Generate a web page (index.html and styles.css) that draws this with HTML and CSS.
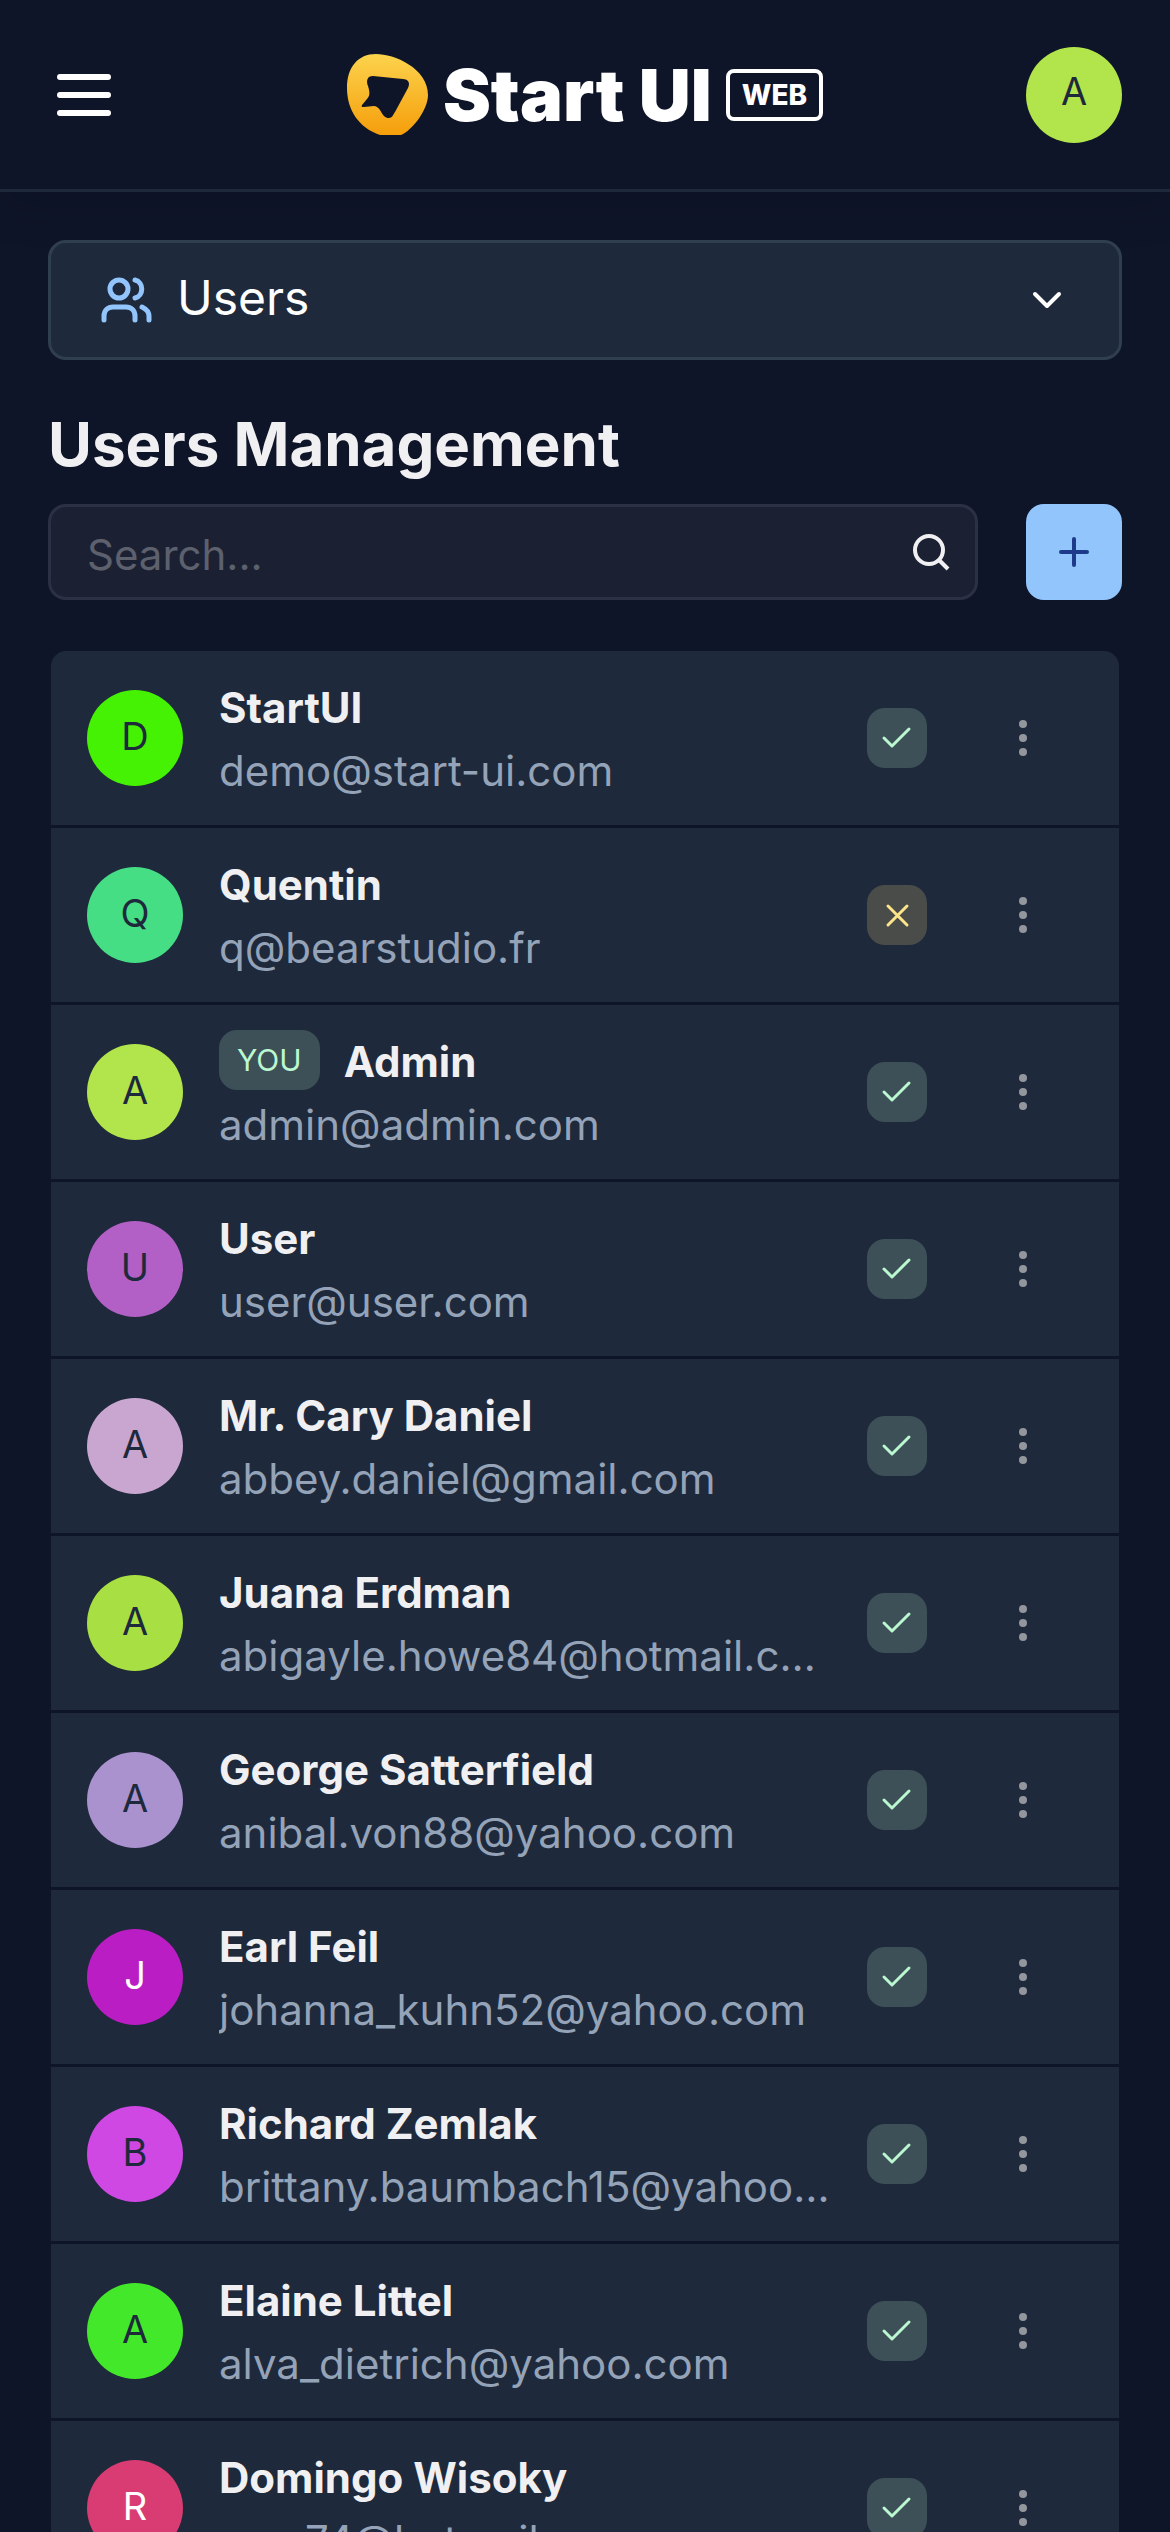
FILE: index.html
```html
<!DOCTYPE html>
<html lang="en">
<head>
<meta charset="utf-8">
<title>Users Management</title>
<meta name="viewport" content="width=device-width, initial-scale=1">
<link rel="stylesheet" href="styles.css">
</head>
<body>
<svg class="sprite" aria-hidden="true">
  <symbol id="check" viewBox="0 0 36 36"><path d="M5 18l8 8L30 9" fill="none" stroke="currentColor" stroke-width="3" stroke-linecap="round" stroke-linejoin="round"/></symbol>
  <symbol id="cross" viewBox="0 0 36 36"><path d="M9 9l19 19M28 9L9 28" fill="none" stroke="currentColor" stroke-width="3" stroke-linecap="round"/></symbol>
  <symbol id="dots" viewBox="0 0 48 48"><g fill="currentColor"><circle cx="24" cy="10" r="4"/><circle cx="24" cy="24" r="4"/><circle cx="24" cy="38" r="4"/></g></symbol>
</svg>
<header class="topbar">
  <button class="icon-button" aria-label="Open menu">
    <svg class="burger" viewBox="0 0 54 48"><path d="M3 6h48M3 24h48M3 42h48" stroke="currentColor" stroke-width="6" stroke-linecap="round"/></svg>
  </button>
  <a class="logo" href="#" aria-label="Start UI Web">
    <svg class="logo-mark" viewBox="0 0 82 82">
      <defs><linearGradient id="gold" x1="0" y1="0" x2="0" y2="1"><stop offset="0" stop-color="#fcd34d"/><stop offset="1" stop-color="#f59e0b"/></linearGradient></defs>
      <path fill="url(#gold)" fill-rule="evenodd" d="M29 0C47 0 81 14 81 41C81 55 66 76 54 81H33C12 74 0 56 0 34C0 13 11 0 29 0zM26 22C20 22 19 27 21 32C23 38 23 42 20 45L15 51C14 53 15 53 17 53L27 52C35 53 34 64 42 64C45 64 46 61 48 58L61 34C64 28 60 25 56 25z"/>
    </svg>
    <span class="logo-text">Start UI</span>
    <span class="logo-tag">WEB</span>
  </a>
  <button class="avatar avatar-account" style="background:#b2e44b">A</button>
</header>
<main class="page">
  <button class="nav-select">
    <svg class="nav-icon" viewBox="0 0 54 54" fill="none" stroke="currentColor" stroke-width="5" stroke-linecap="round"><circle cx="20" cy="16" r="9"/><path d="M5 47v-4c0-6 4-9 9-9h13c5 0 9 3 9 9v4M36 7c9 2 9 16 0 18M43 34c4 2 7 5 7 9v4"/></svg>
    <span class="nav-label">Users</span>
    <svg class="chevron" viewBox="0 0 48 48"><path d="M12 18l12 12 12-12" fill="none" stroke="currentColor" stroke-width="4" stroke-linecap="round" stroke-linejoin="round"/></svg>
  </button>
  <h1 class="title">Users Management</h1>
  <div class="toolbar">
    <label class="search">
      <input type="search" placeholder="Search..." aria-label="Search">
      <svg class="search-icon" viewBox="0 0 48 48" fill="none" stroke="currentColor" stroke-width="4"><circle cx="22" cy="22" r="14"/><path d="M32 32l9 9"/></svg>
    </label>
    <button class="add" aria-label="Add user"><svg class="plus" viewBox="0 0 48 48"><path d="M24 11v26M11 24h26" stroke="currentColor" stroke-width="4" stroke-linecap="round"/></svg></button>
  </div>
  <ul class="users" id="users"></ul>
</main>
<script src="users.js"></script>
</body>
</html>
```
FILE: users.js
```js
const users = [
  { initial: 'D', color: '#46f203', name: 'StartUI', email: 'demo@start-ui.com' },
  { initial: 'Q', color: '#46de84', name: 'Quentin', email: 'q@bearstudio.fr', disabled: true },
  { initial: 'A', color: '#b2e44b', name: 'Admin', email: 'admin@admin.com', you: true },
  { initial: 'U', color: '#b25fc6', name: 'User', email: 'user@user.com' },
  { initial: 'A', color: '#c9a6cf', name: 'Mr. Cary Daniel', email: 'abbey.daniel@gmail.com' },
  { initial: 'A', color: '#a8e043', name: 'Juana Erdman', email: 'abigayle.howe84@hotmail.com' },
  { initial: 'A', color: '#aa92cf', name: 'George Satterfield', email: 'anibal.von88@yahoo.com' },
  { initial: 'J', color: '#bb1dc4', name: 'Earl Feil', email: 'johanna_kuhn52@yahoo.com', light: true },
  { initial: 'B', color: '#cf48e4', name: 'Richard Zemlak', email: 'brittany.baumbach15@yahoo.com' },
  { initial: 'A', color: '#44e82b', name: 'Elaine Littel', email: 'alva_dietrich@yahoo.com' },
  { initial: 'R', color: '#d83c72', name: 'Domingo Wisoky', email: 'rosa74@hotmail.com', light: true }
];

document.getElementById('users').innerHTML = users.map(u => `
  <li class="user">
    <span class="avatar${u.light ? ' avatar-light' : ''}" style="background:${u.color}">${u.initial}</span>
    <div class="identity">
      <div class="name-line">${u.you ? '<span class="badge">YOU</span>' : ''}<a class="name" href="#">${u.name}</a></div>
      <div class="email">${u.email}</div>
    </div>
    <span class="status${u.disabled ? ' status-off' : ''}"><svg class="status-icon"><use href="#${u.disabled ? 'cross' : 'check'}"/></svg></span>
    <button class="more" aria-label="Actions for ${u.name}"><svg class="more-icon"><use href="#dots"/></svg></button>
  </li>`).join('');
```
FILE: styles.css
```css
* { box-sizing: border-box; }
html { background: #0f1528; }
body {
  margin: 0;
  height: 100vh;
  overflow: hidden;
  background: #0f1528;
  color: #f0f0f2;
  font-family: Inter, "Liberation Sans", sans-serif;
  font-size: 42px;
}
button, input { font: inherit; color: inherit; border: 0; padding: 0; margin: 0; background: none; }
a { color: inherit; text-decoration: none; }
svg { display: block; flex: none; }
.sprite { display: none; }

.topbar {
  display: flex;
  align-items: center;
  justify-content: space-between;
  height: 192px;
  padding: 0 48px;
  border-bottom: 3px solid #1e293b;
  box-shadow: 0 6px 48px rgba(5, 7, 30, 0.2);
  color: #fff;
}
.icon-button { width: 96px; padding-left: 9px; }
.burger { width: 54px; height: 48px; }
.logo { display: flex; align-items: center; }
.logo-mark { width: 82px; height: 82px; }
.logo-text { margin-left: 14px; font-size: 72px; font-weight: 900; line-height: 72px; white-space: nowrap; }
.logo-tag {
  margin-left: 14px;
  padding: 0 12px;
  border: 4px solid #fff;
  border-radius: 8px;
  font-size: 28px;
  font-weight: 800;
  line-height: 44px;
}

.avatar {
  display: flex;
  flex: none;
  align-items: center;
  justify-content: center;
  width: 96px;
  height: 96px;
  padding-bottom: 4px;
  border-radius: 50%;
  color: #1e293b;
  font-size: 38px;
}
.avatar-light { color: #fff; }
.avatar-account { padding-bottom: 8px; color: #1e293b; }

.page { padding: 48px; }
.nav-select {
  display: flex;
  align-items: center;
  gap: 24px;
  width: 100%;
  height: 120px;
  padding: 0 48px;
  border: 3px solid #2f3f50;
  border-radius: 18px;
  background: #1e293b;
  color: #fff;
  font-size: 48px;
  text-align: left;
}
.nav-icon { width: 54px; height: 54px; color: #93c5fd; }
.nav-label { padding-bottom: 6px; }
.chevron { width: 48px; height: 48px; margin-left: auto; }

.title { margin: 48px 0 24px; font-size: 60px; font-weight: 700; line-height: 72px; }
.toolbar { display: flex; gap: 48px; }
.search {
  display: flex;
  flex: 1;
  align-items: center;
  height: 96px;
  padding: 0 20px 0 36px;
  border: 3px solid #2c3044;
  border-radius: 18px;
  background: #1c2033;
}
.search input { flex: 1; min-width: 0; height: 100%; padding-top: 4px; outline: 0; }
.search input::placeholder { color: #5d606d; opacity: 1; }
.search-icon { width: 48px; height: 48px; }
.add {
  display: grid;
  place-items: center;
  width: 96px;
  height: 96px;
  border-radius: 18px;
  background: #93c5fd;
  color: #1e3a8a;
}
.plus { width: 48px; height: 48px; }

.users { margin: 51px 3px 0; padding: 0; list-style: none; border-radius: 15px 15px 0 0; overflow: hidden; }
.user {
  display: flex;
  align-items: center;
  height: 177px;
  padding: 0 48px 0 36px;
  border-bottom: 3px solid #0f1528;
  background: #1e293b;
}
.identity { flex: 1; min-width: 0; margin: 0 36px; padding-top: 2px; }
.name-line { display: flex; align-items: flex-start; gap: 24px; height: 63px; }
.name { font-weight: 700; line-height: 63px; }
.badge {
  padding: 0 18px;
  border-radius: 18px;
  background: #3d5057;
  color: #bbf7d0;
  font-size: 30px;
  line-height: 60px;
}
.email { overflow: hidden; color: #94a3b8; line-height: 63px; text-overflow: ellipsis; white-space: nowrap; }
.status {
  display: grid;
  place-items: center;
  width: 60px;
  height: 60px;
  border-radius: 18px;
  background: #3d5057;
  color: #bbf7d0;
}
.status-off { background: #4a4c4a; color: #fde68a; }
.status-icon { width: 36px; height: 36px; }
.more { display: grid; place-items: center; width: 96px; height: 96px; margin-left: 48px; color: #94969e; }
.more-icon { width: 48px; height: 48px; }
```
